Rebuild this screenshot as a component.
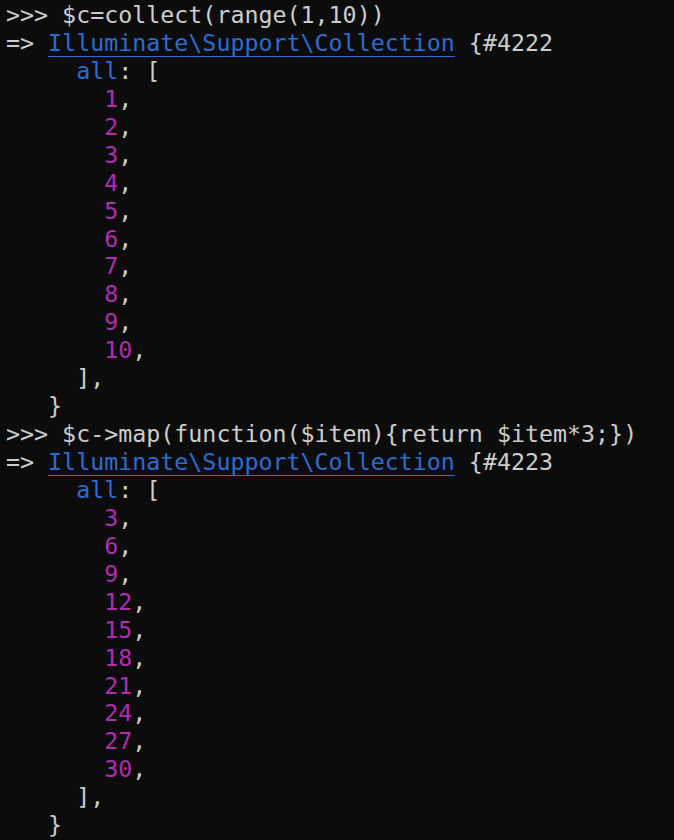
import React from "react";

const G = "text-[#cccccc]";
const B = "text-[#2c6cd0]";
const P = "text-[#b12bb4]";

function Block({ cmd, id, nums }: { cmd: string; id: string; nums: number[] }) {
  return (
    <>
      <div className={G}>{">>> " + cmd}</div>
      <div>
        <span className={G}>{"=> "}</span>
        <span className={`${B} underline decoration-1 underline-offset-[5px]`}>Illuminate\Support\Collection</span>
        <span className={G}>{" {#" + id}</span>
      </div>
      <div>
        <span>{"     "}</span>
        <span className={B}>all</span>
        <span className={G}>: [</span>
      </div>
      {nums.map((n) => (
        <div key={n}>
          <span>{"       "}</span>
          <span className={P}>{n}</span>
          <span className={G}>,</span>
        </div>
      ))}
      <div className={G}>{"     ],"}</div>
      <div className={G}>{"   }"}</div>
    </>
  );
}

export default function App() {
  return (
    <div
      className="w-[674px] h-[840px] bg-[#0c0c0c] overflow-hidden pl-[6px] pt-[1px] whitespace-pre text-[23.3px] leading-[27.93px]"
      style={{ fontFamily: '"DejaVu Sans Mono", monospace' }}
    >
      <Block cmd="$c=collect(range(1,10))" id="4222" nums={[1, 2, 3, 4, 5, 6, 7, 8, 9, 10]} />
      <Block
        cmd="$c->map(function($item){return $item*3;})"
        id="4223"
        nums={[3, 6, 9, 12, 15, 18, 21, 24, 27, 30]}
      />
    </div>
  );
}
